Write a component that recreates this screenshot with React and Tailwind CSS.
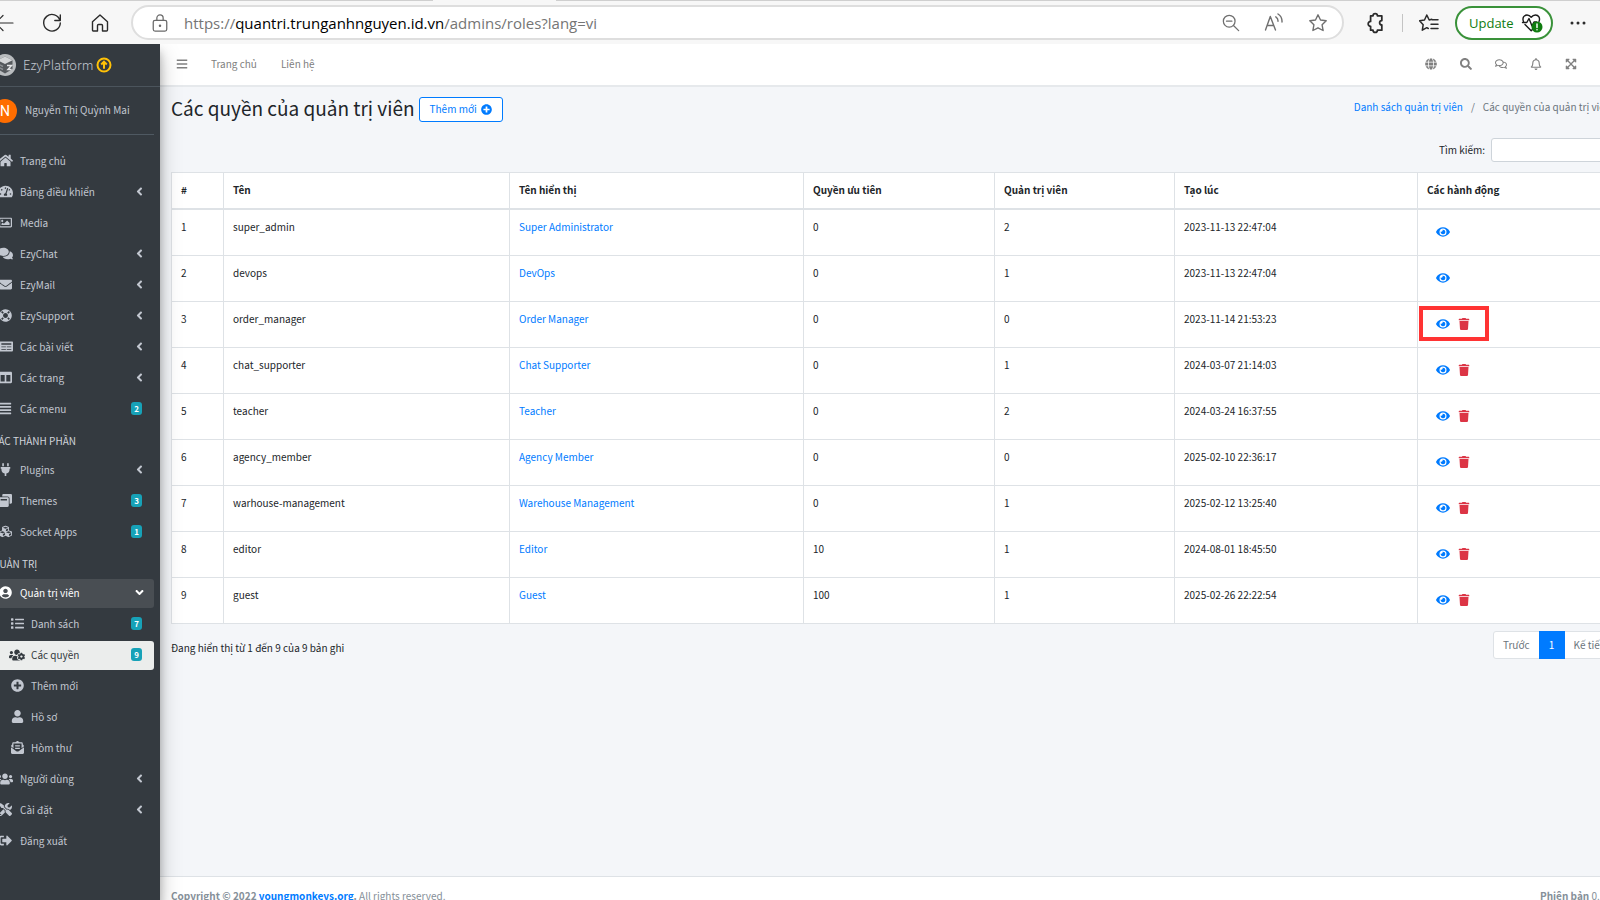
import React from "react";
import {
  FaHome, FaTachometerAlt, FaRegImage, FaComments, FaEnvelope, FaLifeRing, FaNewspaper, FaColumns,
  FaAlignJustify, FaPlug, FaWindowRestore, FaCubes, FaUserCircle, FaList, FaUsersCog, FaPlusCircle,
  FaUser, FaEnvelopeOpenText, FaUsers, FaTools, FaSignOutAlt, FaAngleLeft, FaAngleDown, FaBars,
  FaGlobe, FaSearch, FaRegComments, FaRegBell, FaExpandArrowsAlt, FaThLarge, FaEye, FaTrash,
} from "react-icons/fa";

const SM = "size-[13px]";
const MD = "size-[15px]";
const LG = "size-4";

const MENU = [
  { icon: FaHome, size: MD, label: "Trang chủ" },
  { icon: FaTachometerAlt, size: MD, label: "Bảng điều khiển", more: true },
  { icon: FaRegImage, size: SM, label: "Media" },
  { icon: FaComments, size: MD, label: "EzyChat", more: true },
  { icon: FaEnvelope, size: SM, label: "EzyMail", more: true },
  { icon: FaLifeRing, size: SM, label: "EzySupport", more: true },
  { icon: FaNewspaper, size: MD, label: "Các bài viết", more: true },
  { icon: FaColumns, size: SM, label: "Các trang", more: true },
  { icon: FaAlignJustify, size: SM, label: "Các menu", badge: 2 },
  { header: "CÁC THÀNH PHẦN" },
  { icon: FaPlug, size: SM, label: "Plugins", more: true },
  { icon: FaWindowRestore, size: SM, label: "Themes", badge: 3 },
  { icon: FaCubes, size: SM, label: "Socket Apps", badge: 1 },
  { header: "QUẢN TRỊ" },
  { icon: FaUserCircle, size: SM, label: "Quản trị viên", open: true },
  { icon: FaList, size: SM, label: "Danh sách", badge: 7, sub: true },
  { icon: FaUsersCog, size: LG, label: "Các quyền", badge: 9, sub: true, active: true },
  { icon: FaPlusCircle, size: SM, label: "Thêm mới", sub: true },
  { icon: FaUser, size: SM, label: "Hồ sơ", sub: true },
  { icon: FaEnvelopeOpenText, size: SM, label: "Hòm thư", sub: true },
  { icon: FaUsers, size: LG, label: "Người dùng", more: true },
  { icon: FaTools, size: SM, label: "Cài đặt", more: true },
  { icon: FaSignOutAlt, size: SM, label: "Đăng xuất" },
];

const ROWS = [
  ["super_admin", "Super Administrator", 0, 2, "2023-11-13 22:47:04", false],
  ["devops", "DevOps", 0, 1, "2023-11-13 22:47:04", false],
  ["order_manager", "Order Manager", 0, 0, "2023-11-14 21:53:23", true],
  ["chat_supporter", "Chat Supporter", 0, 1, "2024-03-07 21:14:03", true],
  ["teacher", "Teacher", 0, 2, "2024-03-24 16:37:55", true],
  ["agency_member", "Agency Member", 0, 0, "2025-02-10 22:36:17", true],
  ["warhouse-management", "Warehouse Management", 0, 1, "2025-02-12 13:25:40", true],
  ["editor", "Editor", 10, 1, "2024-08-01 18:45:50", true],
  ["guest", "Guest", 100, 1, "2025-02-26 22:22:54", true],
];

const HEADS = ["#", "Tên", "Tên hiển thị", "Quyền ưu tiên", "Quản trị viên", "Tạo lúc", "Các hành động"];

function Line({ className, children, w = 1.4, box = "0 0 20 20" }) {
  return (
    <svg viewBox={box} className={className} fill="none" stroke="currentColor" strokeWidth={w} strokeLinecap="round" strokeLinejoin="round" aria-hidden="true">
      {children}
    </svg>
  );
}

const STAR = "M10 1.8l2.5 5.2 5.7.8-4.1 4 1 5.700-5.100-2.700-5.100 2.700 1-5.700-4.100-4 5.700-.8z";

function BrowserBar() {
  return (
    <div className="shrink-0 bg-[#f7f7f7] text-[#2b2b2b]">
      <div className="flex h-px">
        <div className="w-[433px] bg-[#cfcfcf]" />
        <div className="w-[123px]" />
        <div className="flex-1 bg-[#cfcfcf]" />
      </div>
      <div className="flex h-[43px] items-center">
        <button aria-label="Back" className="-ml-[6px] w-5">
          <Line className="size-5" w={1.2}><path d="M19 10H1.500M9 2.500L1.500 10l7.500 7.500" /></Line>
        </button>
        <button aria-label="Refresh" className="ml-7">
          <Line className="size-5"><path d="M18 7.500A8.300 8.300 0 1 0 18.300 10M18.300 2v5.500h-5.500" /></Line>
        </button>
        <button aria-label="Home" className="ml-7">
          <Line className="size-5"><path d="M2.500 8.700L10 2l7.500 6.700V17a1 1 0 0 1-1 1h-4v-5.500a1 1 0 0 0-1-1h-3a1 1 0 0 0-1 1V18h-4a1 1 0 0 1-1-1z" /></Line>
        </button>
        <div className="ml-[21px] flex h-[35px] min-w-0 flex-1 items-center rounded-full border-2 border-[#dedede] bg-white pr-[14px] pl-[18px]">
          <Line className="size-[18px] text-[#6a6a6a]"><rect x="2.500" y="7" width="15" height="12" rx="2" /><path d="M6.500 7V4.500a3.500 3.500 0 0 1 7 0V7" /><circle cx="10" cy="13" r=".7" fill="currentColor" /></Line>
          <div className="ml-[15px] flex-1 font-['Open_Sans','Noto_Sans',sans-serif] text-[15px] leading-5 whitespace-nowrap text-[#757575]">
            https://<span className="text-black">quantri.trunganhnguyen.id.vn</span>/admins/roles?lang=vi
          </div>
          <div className="flex items-center gap-6 text-[#6f6f6f]">
            <button aria-label="Zoom out"><Line className="size-[18px]"><circle cx="8" cy="8" r="6.500" /><path d="M5 8h6M13 13l5.500 5.500" /></Line></button>
            <button aria-label="Read aloud"><Line className="size-5"><path d="M1.500 17L6.300 3.500 11.500 17M3.300 12.500h6.500M11.800 3.800c1.500 1 2.300 2.700 2.200 4.400M14 1c2.800 1.800 4.200 4.800 4 8" /></Line></button>
            <button aria-label="Add to favorites"><Line className="size-5"><path d={STAR} /></Line></button>
          </div>
        </div>
        <button aria-label="Extensions" className="ml-5">
          <Line className="size-[22px]" w={1.6}><path d="M6 3.500h2.200a2 2 0 0 1 4 0h4v4.300a2 2 0 0 0 0 4V16.500h-4a2 2 0 0 1-4 0H6V13a2.200 2.200 0 1 1 0-4.400z" /></Line>
        </button>
        <div className="ml-4 h-[18px] w-px bg-[#c4c4c4]" />
        <button aria-label="Favorites" className="ml-4">
          <Line className="size-5" w={1.5}><path d="M12.800 6.300L10.200 7 7.800 2 5.500 7l-5 .8 3.700 3.900-.9 5.500 4.500-2.500 1.500.8M13 6.800h6M12 11.300h7M12 15.600h7" /></Line>
        </button>
        <button className="ml-4 flex h-[34px] w-[98px] shrink-0 items-center justify-between rounded-full border-2 border-[#3a923a] bg-white pr-2 pl-3 font-['Open_Sans','Noto_Sans',sans-serif] text-[13px] text-[#107c10]">
          Update
          <svg viewBox="0 0 22 20" className="h-5 w-[22px]" fill="none" aria-hidden="true">
            <path d="M2.500 8.500C1 5 3 2 6 2c2 0 3.200 1 4.200 2.300C11.200 3 12.500 2 14.500 2c3 0 5 3 3.500 6.500M4 11.500l6.200 6.300 2-2M1.500 9.500h4.300L8 5.500l3 7.500 2-4h2.500" stroke="#1b1b1b" strokeWidth="1.400" strokeLinejoin="round" strokeLinecap="round" />
            <circle cx="16" cy="14" r="5.500" fill="#107c10" />
            <path d="M16 11v3.500" stroke="#fff" strokeWidth="1.500" strokeLinecap="round" />
            <circle cx="16" cy="16.700" r=".8" fill="#fff" />
          </svg>
        </button>
        <button aria-label="Settings and more" className="mr-3 ml-[15px] shrink-0">
          <svg viewBox="0 0 20 20" className="size-5" fill="currentColor" aria-hidden="true"><circle cx="4" cy="10" r="1.500" /><circle cx="10" cy="10" r="1.500" /><circle cx="16" cy="10" r="1.500" /></svg>
        </button>
      </div>
    </div>
  );
}

function MenuItem({ item }) {
  if (item.header) {
    return <li className="flex h-[30px] items-center pl-[6px] text-[#d0d4db]">{item.header}</li>;
  }
  const Icon = item.icon;
  const tone = item.active
    ? "bg-[#ebedec] text-[#343a40]"
    : item.open
      ? "bg-[#494e53] text-white"
      : "text-[#c2c7d0]";
  return (
    <li className="pb-[2px]">
      <a href="#" className={`flex h-[29px] items-center rounded-[3px] pr-3 pb-[2px] ${tone} ${item.sub ? "pl-[21px]" : "pl-[9px]"}`}>
        <span className="flex w-5 shrink-0 justify-center"><Icon className={`shrink-0 ${item.size}`} /></span>
        <span className={`flex-1 ${item.sub ? "ml-1" : "ml-[5px]"}`}>{item.label}</span>
        {item.more && <FaAngleLeft className="-mr-1 size-[13px]" />}
        {item.open && <FaAngleDown className="-mr-1 size-[13px]" />}
        {item.badge && (
          <span className="flex h-[13px] w-[11px] items-center justify-center rounded-[3px] bg-[#17a2b8] text-[8px] font-bold text-white">{item.badge}</span>
        )}
      </a>
    </li>
  );
}

function Sidebar() {
  return (
    <aside className="z-10 -ml-5 flex w-[180px] shrink-0 flex-col bg-[#343a40] text-[#c2c7d0] shadow-[0_10px_20px_rgba(0,0,0,0.25),0_8px_8px_rgba(0,0,0,0.22)]">
      <a href="#" className="flex h-[43px] items-center border-b border-[#4b545c] pb-px pl-[13px] text-[13px] font-light">
        <svg viewBox="0 0 24 24" className="size-6 shrink-0" aria-hidden="true">
          <circle cx="12" cy="12" r="11" fill="#b9bcbf" />
          <path d="M12 3.500l7.500 3.800v8.800L12 20.500l-7.500-4.400V7.300z" fill="#55595d" />
          <path d="M12 3.500l7.500 3.800L12 11 4.500 7.300z" fill="#d4d6d8" />
          <path d="M14 12.500h4.500l-3.500 4h3.500" stroke="#e3e4e6" strokeWidth="1.500" fill="none" />
          <path d="M6 11.500l4 2M6 14.500l4 2" stroke="#8c9094" strokeWidth="1.500" />
        </svg>
        <span className="ml-[6px]">EzyPlatform</span>
        <svg viewBox="0 0 16 16" className="ml-[2px] size-4 shrink-0" fill="none" stroke="#ffc107" strokeWidth="2" aria-hidden="true"><circle cx="8" cy="8" r="6.500" /><path d="M8 11.800V5M5.200 7.500L8 4.700l2.800 2.800" /></svg>
      </a>
      <div className="mr-[6px] ml-[6px] flex h-12 items-center border-b border-[#4f5962] pl-[7px]">
        <span className="flex size-6 shrink-0 items-center justify-center rounded-full bg-[#ff6d00] font-[Roboto,sans-serif] text-sm text-white">N</span>
        <a href="#" className="ml-2 pb-[2px]">Nguyễn Thị Quỳnh Mai</a>
      </div>
      <nav className="mt-3 mr-[6px] ml-[6px]"><ul>{MENU.map((m) => <MenuItem key={m.label || m.header} item={m} />)}</ul></nav>
    </aside>
  );
}

function Navbar() {
  const icons = [
    [FaGlobe, "Language"], [FaSearch, "Search"], [FaRegComments, "Messages"],
    [FaRegBell, "Notifications"], [FaExpandArrowsAlt, "Fullscreen"], [FaThLarge, "Panel"],
  ];
  return (
    <header className="flex h-[43px] shrink-0 items-center justify-between border-b-2 border-[#e6e9ec] bg-white pr-[5px] pb-[2px] pl-4 text-[#808080]">
      <div className="flex items-center">
        <button aria-label="Menu"><FaBars className="size-3" /></button>
        <a href="#" className="ml-[23px]">Trang chủ</a>
        <a href="#" className="ml-6">Liên hệ</a>
      </div>
      <div className="flex">
        {icons.map(([Icon, name]) => (
          <button key={name} aria-label={name} className="flex w-[35px] justify-center"><Icon className="size-3" /></button>
        ))}
      </div>
    </header>
  );
}

function RolesTable() {
  return (
    <table className="mt-[10px] w-full table-fixed border-collapse bg-white text-left">
      <colgroup>
        <col className="w-[52px]" /><col className="w-[286px]" /><col className="w-[294px]" /><col className="w-[191px]" /><col className="w-[180px]" /><col className="w-[243px]" /><col />
      </colgroup>
      <thead>
        <tr className="h-9">
          {HEADS.map((h) => <th key={h} className="border border-b-2 border-[#dee2e6] px-[9px] font-bold">{h}</th>)}
        </tr>
      </thead>
      <tbody>
        {ROWS.map((r, i) => (
          <tr key={r[0]} className="h-[46px] align-top first:h-[47px]">
            {[i + 1, r[0], r[1], r[2], r[3], r[4]].map((c, j) => (
              <td key={j} className="border border-[#dee2e6] px-[9px] pt-[9px]">
                {j === 2 ? <a href="#" className="text-[#007bff]">{c}</a> : c}
              </td>
            ))}
            <td className="relative border border-[#dee2e6] px-[18px] pt-[15px]">
              <div className="flex items-center gap-2">
                <button aria-label="Xem" className="text-[#007bff]"><FaEye className="size-[14px]" /></button>
                {r[5] && <button aria-label="Xóa" className="text-[#dc3545]"><FaTrash className="size-3" /></button>}
              </div>
              {i === 2 && <div className="absolute top-1 left-px h-[35px] w-[70px] border-4 border-[#ff3333]" />}
            </td>
          </tr>
        ))}
      </tbody>
    </table>
  );
}

export default function App() {
  return (
    <div className="flex h-screen flex-col overflow-hidden font-['Noto_Sans_CJK_SC',sans-serif] text-[10px] leading-4 text-[#212529]">
      <BrowserBar />
      <div className="flex min-h-0 flex-1 overflow-hidden">
        <Sidebar />
        <div className="-mr-7 flex min-w-0 flex-1 flex-col bg-[#f4f6f9]">
          <Navbar />
          <main className="flex-1 pr-[11px] pl-[11px]">
            <div className="flex items-start justify-between pt-[9px]">
              <div className="flex items-center">
                <h1 className="pb-[2px] text-[19px] leading-6">Các quyền của quản trị viên</h1>
                <button className="ml-1 flex h-[25px] items-center gap-1 rounded-[3px] border border-[#007bff] bg-white px-[10px] text-[#007bff]">
                  Thêm mới <FaPlusCircle className="size-[11px]" />
                </button>
              </div>
              <nav aria-label="breadcrumb" className="mr-[6px] flex gap-2 pt-[3px] text-[#6c757d]">
                <a href="#" className="text-[#007bff]">Danh sách quản trị viên</a>
                <span>/</span>
                <span>Các quyền của quản trị viên</span>
              </nav>
            </div>
            <div className="mt-4 flex items-center justify-end">
              <label htmlFor="search">Tìm kiếm:</label>
              <input id="search" type="search" className="ml-[6px] h-6 w-[126px] rounded-[3px] border border-[#ced4da] bg-white px-2" />
            </div>
            <RolesTable />
            <div className="flex items-start justify-between pt-[7px]">
              <p className="pt-[9px]">Đang hiển thị từ 1 đến 9 của 9 bản ghi</p>
              <div className="mr-px flex h-7 rounded-[3px] border border-[#dee2e6] bg-white text-[#6c757d]">
                <button className="px-[9px]">Trước</button>
                <button className="-my-px w-[26px] bg-[#007bff] text-white">1</button>
                <button className="px-[9px]">Kế tiếp</button>
              </div>
            </div>
          </main>
          <footer className="flex h-6 shrink-0 justify-between border-t border-[#dee2e6] bg-white pr-[11px] pl-[11px] pt-[11px] text-[#869099]">
            <p><b>Copyright © 2022 <a href="#" className="text-[#007bff]">youngmonkeys.org</a>.</b> All rights reserved.</p>
            <p className="w-[77px]"><b>Phiên bản</b> 0.</p>
          </footer>
        </div>
      </div>
    </div>
  );
}
